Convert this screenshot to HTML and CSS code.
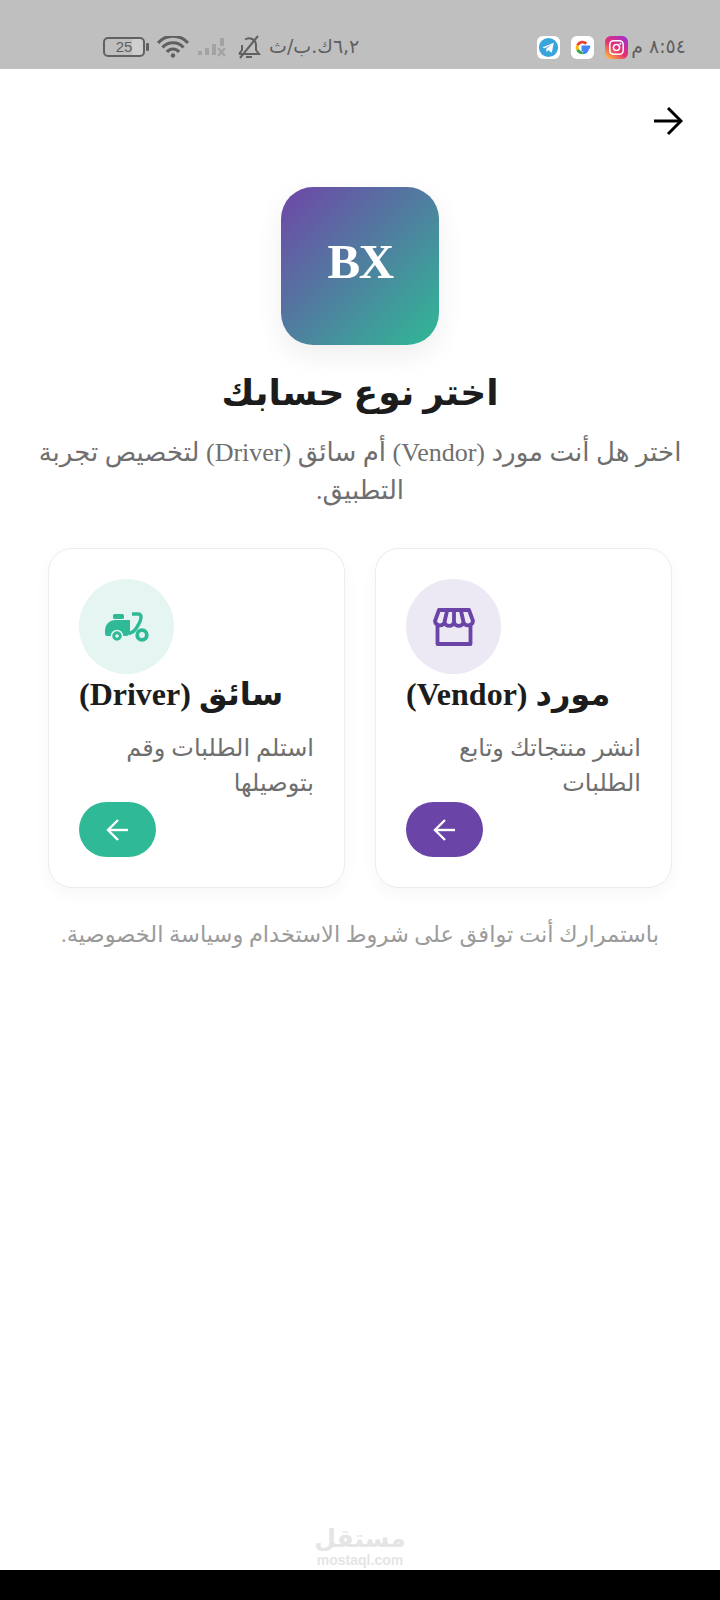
FILE: index.html
```html
<!DOCTYPE html>
<html lang="ar" dir="rtl">
<head>
    <meta charset="UTF-8">
    <meta name="viewport" content="width=device-width, initial-scale=1.0">
    <title>BX</title>
    <link rel="stylesheet" href="styles.css">
</head>
<body>
    <div class="status-bar">
        <div class="status-group status-right">
            <span class="status-time">٨:٥٤ م</span>
            <svg class="app-icon" viewBox="0 0 24 24">
                <defs>
                    <linearGradient id="insta" x1="0.1" y1="1" x2="0.9" y2="0">
                        <stop offset="0" stop-color="#fdc03a"/>
                        <stop offset="0.45" stop-color="#e8306f"/>
                        <stop offset="1" stop-color="#a02fd0"/>
                    </linearGradient>
                </defs>
                <rect width="24" height="24" rx="6" fill="url(#insta)"/>
                <rect x="5" y="5" width="14" height="14" rx="4" fill="none" stroke="#fff" stroke-width="1.6"/>
                <circle cx="12" cy="12" r="3.2" fill="none" stroke="#fff" stroke-width="1.6"/>
                <circle cx="16" cy="8" r="1" fill="#fff"/>
            </svg>
            <svg class="app-icon" viewBox="0 0 24 24">
                <rect width="24" height="24" rx="6" fill="#fff"/>
                <path d="M20 11.500H12.500v2.600h4.600a5.300 5.300 0 0 1-5.100 3.500" fill="none" stroke="#4285f4" stroke-width="3"/>
                <path d="M12 17.600a5.600 5.600 0 0 1-5.100-3.300" fill="none" stroke="#34a853" stroke-width="3"/>
                <path d="M6.900 14.300a5.700 5.700 0 0 1 0-4.600" fill="none" stroke="#fbbc05" stroke-width="3"/>
                <path d="M6.900 9.700A5.600 5.600 0 0 1 16 8" fill="none" stroke="#ea4335" stroke-width="3"/>
            </svg>
            <svg class="app-icon" viewBox="0 0 24 24">
                <rect width="24" height="24" rx="6" fill="#fff"/>
                <circle cx="12" cy="12" r="10" fill="#37a4dc"/>
                <path d="M5.500 12 17.500 7l-2 10.500-3.600-2.700-1.900 1.900-.4-3.300 5.600-4.600-7 4.100z" fill="#fff"/>
            </svg>
        </div>
        <div class="status-group status-left">
            <span class="status-speed">٦,٢ك.ب/ث</span>
            <svg class="bell" viewBox="0 0 24 24" fill="none" stroke="#616161" stroke-width="2">
                <path d="M2 19h20l-3-4V10a7 7 0 0 0-11-5.500M5 10v5l-3 4"/>
                <path d="M9 22h6"/>
                <path d="M3 23 21 1"/>
            </svg>
            <svg class="signal" viewBox="0 0 32 22">
                <rect x="1" y="15" width="4" height="4" fill="#a3a3a3"/>
                <rect x="8" y="12" width="4" height="7" fill="#a3a3a3"/>
                <rect x="15" y="8" width="4" height="11" fill="#a3a3a3"/>
                <rect x="23" y="2" width="4" height="8" fill="#a3a3a3"/>
                <path d="M21 12l7 8m0-8-7 8" stroke="#a3a3a3" stroke-width="2.400"/>
            </svg>
            <svg class="wifi" viewBox="0 0 32 22" fill="none" stroke="#5f5f5f" stroke-width="3.200">
                <path d="M1 7a20 20 0 0 1 30 0"/>
                <path d="M5.500 11.500a14 14 0 0 1 21 0"/>
                <path d="M10 16a7.500 7.500 0 0 1 12 0"/>
                <circle cx="16" cy="19.500" r="2.200" fill="#5f5f5f" stroke="none"/>
            </svg>
            <div class="battery">
                <span class="battery-cap"></span>
                <span class="battery-body">25</span>
            </div>
        </div>
    </div>

    <main class="page">
        <div class="top-row">
            <svg class="back-arrow" viewBox="0 0 30 30" fill="none" stroke="#000" stroke-width="3">
                <path d="M1 15h27"/>
                <path d="M15 2l13 13-13 13"/>
            </svg>
        </div>

        <div class="logo">BX</div>
        <h1 class="title">اختر نوع حسابك</h1>
        <p class="subtitle">اختر هل أنت مورد (Vendor) أم سائق (Driver) لتخصيص تجربة التطبيق.</p>

        <div class="cards">
            <div class="card">
                <div class="card-icon icon-vendor">
                    <svg viewBox="0 0 42 38" fill="none" stroke="#6a44a6" stroke-width="3.800" stroke-linejoin="round">
                        <path d="M6 2h30l4 11a5 5 0 0 1-9.500 1.500 5 5 0 0 1-9.500 0 5 5 0 0 1-9.500 0A5 5 0 0 1 2 13z"/>
                        <path d="M14 3l-2.500 11M21 3v11M28 3l2.500 11"/>
                        <path d="M4.500 18v18h33V18"/>
                    </svg>
                </div>
                <h2 class="card-title">مورد (Vendor)</h2>
                <p class="card-text">انشر منتجاتك وتابع الطلبات</p>
                <button class="go-btn btn-vendor">
                    <svg viewBox="0 0 24 24" fill="none" stroke="#fff" stroke-width="2.400">
                        <path d="M22 12H2"/>
                        <path d="M12 2 2 12l10 10"/>
                    </svg>
                </button>
            </div>
            <div class="card">
                <div class="card-icon icon-driver">
                    <svg viewBox="0 0 44 30">
                        <rect x="8" y="2" width="11" height="5" rx="1.500" fill="#2fb996"/>
                        <path d="M0 22V18A10 10 0 0 1 10 8h15v12c0 2-2 4-4 4H2a2 2 0 0 1-2-2z" fill="#2fb996"/>
                        <circle cx="12" cy="24" r="5.500" fill="#2fb996" stroke="#e5f5f1" stroke-width="1.500"/>
                        <circle cx="12" cy="24" r="1.800" fill="#e5f5f1"/>
                        <path d="M27 2h6c2 0 3 1 3 3 0 4-2 7-4 10-1.500 3-4 5.500-8 6.500" fill="none" stroke="#2fb996" stroke-width="3.400"/>
                        <circle cx="37" cy="23" r="4.800" fill="none" stroke="#2fb996" stroke-width="3.800"/>
                    </svg>
                </div>
                <h2 class="card-title">سائق (Driver)</h2>
                <p class="card-text">استلم الطلبات وقم بتوصيلها</p>
                <button class="go-btn btn-driver">
                    <svg viewBox="0 0 24 24" fill="none" stroke="#fff" stroke-width="2.400">
                        <path d="M22 12H2"/>
                        <path d="M12 2 2 12l10 10"/>
                    </svg>
                </button>
            </div>
        </div>

        <p class="terms">باستمرارك أنت توافق على شروط الاستخدام وسياسة الخصوصية.</p>

        <div class="watermark">
            <span class="watermark-ar">مستقل</span>
            <span class="watermark-en">mostaql.com</span>
        </div>
    </main>

    <div class="bottom-bar"></div>
</body>
</html>
```

FILE: styles.css
```css
* {
    box-sizing: border-box;
}
body {
    font-family: 'Liberation Serif', 'DejaVu Sans', sans-serif;
    margin: 0;
    width: 720px;
    height: 1600px;
    background: #fff;
    color: #1c1c1c;
    display: flex;
    flex-direction: column;
}
.status-bar {
    height: 69px;
    flex-shrink: 0;
    background: #bfbfbf;
    display: flex;
    justify-content: space-between;
    align-items: flex-start;
    padding: 35px 34px 0 103px;
    color: #5f5f5f;
}
.status-group {
    display: flex;
    align-items: center;
    height: 24px;
}
.status-right {
    gap: 11px;
}
.status-time,
.status-speed {
    font-family: 'DejaVu Sans', sans-serif;
    font-size: 19px;
    line-height: 20px;
    margin-bottom: 3px;
    white-space: nowrap;
}
.status-time {
    margin-left: -8px;
}
.status-left {
    gap: 8px;
}
.app-icon {
    width: 23px;
    height: 23px;
}
.bell {
    width: 24px;
    height: 24px;
}
.signal {
    width: 32px;
    height: 22px;
}
.wifi {
    width: 32px;
    height: 22px;
}
.battery {
    display: flex;
    align-items: center;
    gap: 1px;
}
.battery-body {
    width: 42px;
    height: 20px;
    border: 2px solid #616161;
    border-radius: 5px;
    font-family: 'Liberation Sans', sans-serif;
    font-size: 15px;
    line-height: 16px;
    text-align: center;
    background: linear-gradient(90deg, #bfbfbf 70%, #cfcfcf 70%);
}
.battery-cap {
    width: 3px;
    height: 8px;
    background: #616161;
    border-radius: 1px;
}
.page {
    flex: 1;
    display: flex;
    flex-direction: column;
    align-items: center;
    padding: 0 30px;
}
.top-row {
    width: 100%;
    height: 118px;
    padding: 37px 7px 0 0;
    flex-shrink: 0;
}
.back-arrow {
    display: block;
    width: 30px;
    height: 30px;
}
.logo {
    width: 158px;
    height: 158px;
    border-radius: 32px;
    background: linear-gradient(135deg, #6f45a8, #2fb996);
    box-shadow: 0 10px 28px rgba(0, 0, 0, 0.07);
    color: #fff;
    font-size: 49px;
    font-weight: 700;
    letter-spacing: -1.5px;
    padding-bottom: 9px;
    display: flex;
    align-items: center;
    justify-content: center;
}
.title {
    margin: 26px 0 0;
    font-size: 36px;
    line-height: 44px;
    font-weight: 700;
    text-align: center;
}
.subtitle {
    margin: 19px 0 0;
    font-size: 26px;
    line-height: 38px;
    color: #6f6f6f;
    text-align: center;
}
.cards {
    width: 624px;
    display: grid;
    grid-template-columns: 1fr 1fr;
    gap: 30px;
    margin-top: 38px;
}
.card {
    height: 340px;
    border: 1px solid #ececec;
    border-radius: 24px;
    background: #fff;
    box-shadow: 0 6px 18px rgba(0, 0, 0, 0.035);
    padding: 30px;
    display: flex;
    flex-direction: column;
}
.card-icon {
    width: 95px;
    height: 95px;
    border-radius: 50%;
    align-self: flex-end;
    display: flex;
    align-items: center;
    justify-content: center;
}
.icon-vendor svg {
    width: 42px;
    height: 38px;
}
.icon-driver svg {
    width: 44px;
    height: 30px;
}
.icon-vendor {
    background: #ece8f4;
}
.icon-driver {
    background: #e5f5f1;
}
.card-title {
    margin: -1px 0 0;
    font-size: 32px;
    line-height: 42px;
    font-weight: 700;
    white-space: nowrap;
    text-align: left;
}
.card-text {
    margin: 16px 0 0;
    font-size: 24px;
    line-height: 35px;
    color: #6f6f6f;
}
.go-btn {
    width: 77px;
    height: 55px;
    margin-top: auto;
    border: none;
    border-radius: 28px;
    align-self: flex-end;
    display: flex;
    align-items: center;
    justify-content: center;
}
.go-btn svg {
    width: 24px;
    height: 24px;
}
.btn-vendor {
    background: #6a44a6;
}
.btn-driver {
    background: #2fb996;
}
.terms {
    margin: 33px 0 0;
    font-size: 22.500px;
    line-height: 28px;
    color: #9b9b9b;
    text-align: center;
    white-space: nowrap;
}
.watermark {
    margin-top: auto;
    margin-bottom: 2px;
    display: flex;
    flex-direction: column;
    align-items: center;
    color: #e5e5e5;
    direction: ltr;
}
.watermark-ar {
    font-family: 'DejaVu Sans', sans-serif;
    font-size: 25px;
    font-weight: 700;
    line-height: 27px;
}
.watermark-en {
    font-family: 'Liberation Sans', sans-serif;
    font-size: 14px;
    font-weight: 700;
    line-height: 16px;
}
.bottom-bar {
    height: 30px;
    flex-shrink: 0;
    background: #000;
}
```
